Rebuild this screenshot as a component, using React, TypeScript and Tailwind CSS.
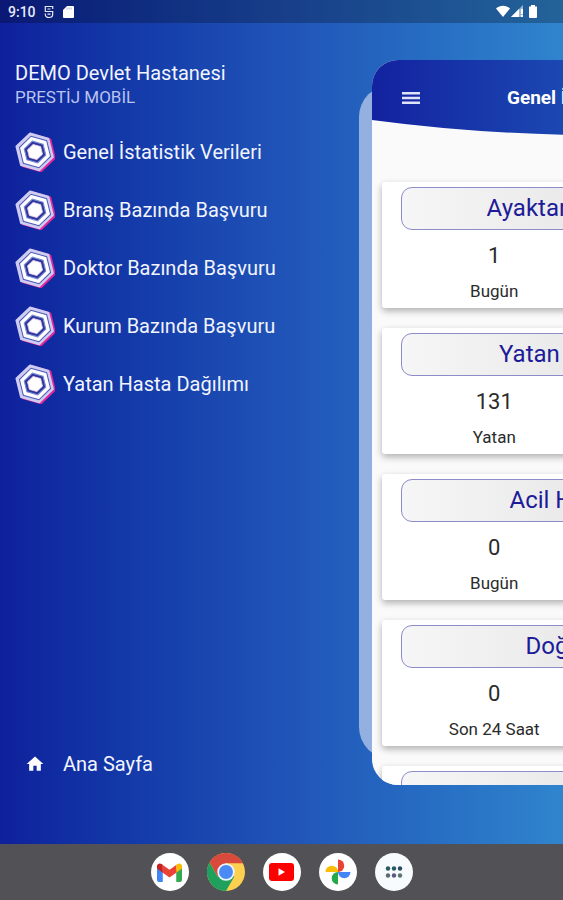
import { MdHome } from 'react-icons/md'

const menuItems = [
  'Genel İstatistik Verileri',
  'Branş Bazında Başvuru',
  'Doktor Bazında Başvuru',
  'Kurum Bazında Başvuru',
  'Yatan Hasta Dağılımı',
]

const stats = [
  { title: 'Ayaktan Hasta Sayısı', value: 1, label: 'Bugün' },
  { title: 'Yatan Hasta Sayısı', value: 131, label: 'Yatan' },
  { title: 'Acil Hasta Sayısı', value: 0, label: 'Bugün' },
  { title: 'Doğum Sayısı', value: 0, label: 'Son 24 Saat' },
  { title: 'Vefat', value: 0, label: 'Bugün' },
]

export default function App() {
  return (
    <div className="flex h-screen min-h-[600px] flex-col overflow-hidden bg-linear-to-r from-[#0f209c] via-[#2053b7] to-[#3084cd] font-[Roboto,sans-serif]">
      <StatusBar />

      <main className="flex min-h-0 flex-1">
        {/* Drawer */}
        <nav className="flex w-[359px] shrink-0 flex-col pt-[38px] pl-[15px] text-[#f2f4fe]">
          <h1 className="text-xl leading-6">DEMO Devlet Hastanesi</h1>
          <p className="text-[17px] leading-6 text-[#b9c4f0]">PRESTİJ MOBİL</p>
          <ul className="mt-[23px] flex flex-col gap-[18px]">
            {menuItems.map(item => (
              <li key={item}>
                <button type="button" className="flex h-10 items-center gap-2 text-xl">
                  <HexIcon />
                  {item}
                </button>
              </li>
            ))}
          </ul>
          <button type="button" className="mt-auto mb-[60px] flex h-10 items-center gap-2 text-xl">
            <span className="flex w-10 justify-center text-white">
              <MdHome className="size-5" />
            </span>
            Ana Sayfa
          </button>
        </nav>

        {/* Pushed page with its shadow layer behind */}
        <div className="relative min-w-0 flex-1 overflow-hidden pt-[37px] pb-[59px] pl-[13px]">
          <div className="absolute top-[62px] bottom-[85px] left-0 w-[440px] rounded-[32px] bg-[#94b0e0]" />
          <section className="relative flex h-full w-[453px] flex-col overflow-hidden rounded-[26px] bg-[#fafafa]">
            <header className="relative h-[75px] shrink-0">
              <svg className="absolute inset-0 h-full w-full" viewBox="0 0 453 75" preserveAspectRatio="none">
                <defs>
                  <linearGradient id="head" x1="0" x2="1" y1="0" y2="0">
                    <stop offset="0" stopColor="#1322a0" />
                    <stop offset="0.5" stopColor="#1d4fb5" />
                    <stop offset="1" stopColor="#2e88cf" />
                  </linearGradient>
                </defs>
                <path d="M0 0H453V60Q226 90 0 60Z" fill="url(#head)" />
              </svg>
              <div className="relative flex h-[76px] items-center text-white">
                <button type="button" aria-label="Menü" className="ml-[30px] text-[#dfe4fa]">
                  <svg className="h-3 w-[18px]" viewBox="0 0 18 12" stroke="currentColor" strokeWidth="2.400">
                    <path d="M0 1.200h18M0 6h18M0 10.800h18" />
                  </svg>
                </button>
                <h2 className="ml-[87px] text-[19px] font-bold whitespace-nowrap">Genel İstatistik</h2>
              </div>
            </header>

            <div className="mt-[47px] flex flex-col gap-5 px-[10px]">
              {stats.map(s => (
                <StatCard key={s.title} {...s} />
              ))}
            </div>
          </section>
        </div>
      </main>

      <Dock />
    </div>
  )
}

function StatCard({ title, value, label }: { title: string; value: number; label: string }) {
  return (
    <article className="shrink-0 rounded-[3px] bg-white pt-[5px] pb-[5px] shadow-[0_3px_7px_rgba(0,0,0,0.3)]">
      <h3 className="mx-[19px] h-[43px] rounded-[11px] border border-[#8c8ccb] bg-linear-to-r from-[#f6f6f6] via-[#e8e8e8] to-[#f6f6f6] text-center text-2xl leading-[41px] text-[#1d1b99]">
        {title}
      </h3>
      <div className="grid grid-cols-2 px-2 pt-[10px] text-center text-[#2b2b2b]">
        <div>
          <p className="text-[22px] leading-8">{value}</p>
          <p className="mt-[7px] text-[17px] leading-6">{label}</p>
        </div>
      </div>
    </article>
  )
}

function StatusBar() {
  return (
    <div className="flex h-[23px] shrink-0 items-center bg-black/25 pr-[25px] pl-2 text-[#e6eaf8]">
      <span className="text-sm font-medium">9:10</span>
      <svg className="ml-2 h-[14px] w-[10px]" viewBox="0 0 10 14" fill="none" stroke="currentColor" strokeWidth="1.2">
        <path d="M8.700 4V1.500H1.300v5h7.400v3c0 2-1.600 3-3.700 3s-3.700-1-3.700-3V8.500M3.500 4h3M3.500 9.200h3" />
      </svg>
      <svg className="ml-[9px] h-3 w-[11px]" viewBox="0 0 11 12" fill="white">
        <path d="M4 0h6a1 1 0 0 1 1 1v10a1 1 0 0 1-1 1H1a1 1 0 0 1-1-1V4Z" />
        <path d="M4 1.500v2M6 1.500v2M8 1.500v2" stroke="#9aa3c8" strokeWidth="0.8" />
      </svg>
      <svg className="ml-auto h-[13px] w-[42px]" viewBox="0 0 42 13" fill="white">
        <path d="M0 3.500C4-.2 10-.2 14 3.500L7 12Z" />
        <path d="M27 0V12H15Z" fillOpacity="0.55" />
        <path d="M23 4V12H15ZM25 4h2v5h-2zM25 10h2v2h-2z" />
        <path d="M35 0h4v1.500h2V12a1 1 0 0 1-1 1h-6a1 1 0 0 1-1-1V1.500h2Z" />
      </svg>
    </div>
  )
}

// pointy-top hexagon, drawn at 20 and scaled around the centre
const HEX = 'M0-20 17.300-10V10L0 20-17.300 10V-10Z'

function HexIcon() {
  return (
    <svg className="size-10" viewBox="-20 -20 40 40">
      <g transform="rotate(-14)" strokeLinejoin="round" strokeWidth="2">
        <path d={HEX} fill="#e2269b" stroke="#e2269b" transform="translate(1.200 1) scale(0.960)" />
        <path d={HEX} fill="#cfccf2" stroke="#cfccf2" transform="translate(-0.300 -0.300) scale(0.950)" />
        <path d={HEX} fill="#4a59b8" transform="scale(0.840)" />
        <path d={HEX} fill="#fff" stroke="#fff" transform="scale(0.740)" />
        <path d={HEX} fill="#2a379f" stroke="#7f8ad0" transform="scale(0.560)" />
        <path d={HEX} fill="#fff" stroke="#f3d0ea" transform="scale(0.390)" />
      </g>
    </svg>
  )
}

function Dock() {
  return (
    <footer className="flex h-14 shrink-0 items-center justify-center gap-[18px] bg-[#525256]">
      <button type="button" aria-label="Gmail" className="flex size-[38px] items-center justify-center rounded-full bg-white">
        <svg className="h-[19px] w-[25px]" viewBox="0 0 52 39">
          <path d="M0 4v31a4 4 0 0 0 4 4h8V15Z" fill="#4285f4" />
          <path d="M52 4v31a4 4 0 0 1-4 4h-8V15Z" fill="#34a853" />
          <path d="M40 4v16l12-9V6c0-5-6-7-10-4Z" fill="#fbbc04" />
          <path d="M12 20V4l14 10L40 4v16L26 30Z" fill="#ea4335" />
          <path d="M0 6v5l12 9V4l-2-2C6-1 0 1 0 6Z" fill="#c5221f" />
        </svg>
      </button>
      <button type="button" aria-label="Chrome" className="size-[38px] rounded-full">
        <svg viewBox="0 0 48 48">
          <circle cx="24" cy="24" r="24" fill="#fdd04f" />
          <path d="M3.200 12A24 24 0 0 1 44.800 12L45.500 13H24L13.600 30Z" fill="#d84a3c" />
          <path d="M3.200 12A24 24 0 0 0 24 48L34.400 30 24 24 13.600 30Z" fill="#1fa15d" />
          <circle cx="24" cy="24" r="11" fill="#eef3fd" />
          <circle cx="24" cy="24" r="8.800" fill="#4a8af4" />
        </svg>
      </button>
      <button type="button" aria-label="YouTube" className="flex size-[38px] items-center justify-center rounded-full bg-white">
        <svg className="h-[18px] w-[25px]" viewBox="0 0 25 18">
          <rect width="25" height="18" rx="3" fill="#f00" />
          <path d="M9.500 5.200 16 9 9.500 12.800Z" fill="#fff" />
        </svg>
      </button>
      <button type="button" aria-label="Fotoğraflar" className="flex size-[38px] items-center justify-center rounded-full bg-white">
        <svg className="size-[26px]" viewBox="0 0 26 26">
          <path d="M13 0.500a6.200 6.200 0 0 1 0 12.500Z" fill="#ea4335" />
          <path d="M25.500 13a6.200 6.200 0 0 1-12.500 0Z" fill="#4285f4" />
          <path d="M13 25.500a6.200 6.200 0 0 1 0-12.500Z" fill="#25a84a" />
          <path d="M0.500 13a6.200 6.200 0 0 1 12.500 0Z" fill="#fbbc04" />
        </svg>
      </button>
      <button type="button" aria-label="Uygulamalar" className="flex size-[38px] items-center justify-center rounded-full bg-[#f8fbfd]">
        <svg className="h-3 w-[18px]" viewBox="0 0 18 12">
          <circle cx="3" cy="2.500" r="2.200" fill="#2b5961" />
          <circle cx="9" cy="2.500" r="2.200" fill="#245b62" />
          <circle cx="15" cy="2.500" r="2.200" fill="#2a4b63" />
          <circle cx="3" cy="9.500" r="2.200" fill="#5b6b70" />
          <circle cx="9" cy="9.500" r="2.200" fill="#5c5684" />
          <circle cx="15" cy="9.500" r="2.200" fill="#5d7468" />
        </svg>
      </button>
    </footer>
  )
}
